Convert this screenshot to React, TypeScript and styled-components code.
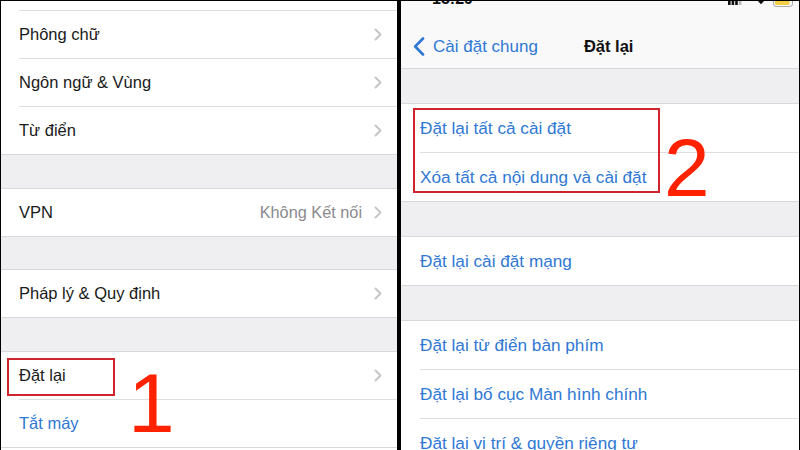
import React from 'react';
import styled, { createGlobalStyle } from 'styled-components';

const Global = createGlobalStyle`
  html, body { margin: 0; padding: 0; background: #000; }
  body { font-family: "Liberation Sans", Arial, sans-serif; -webkit-font-smoothing: antialiased; }
  #root { width: 800px; height: 450px; }
`;

const Frame = styled.div`
  width: 800px;
  height: 450px;
  box-sizing: border-box;
  padding: 1px 1px 0 1px;
  display: flex;
  gap: 4px;
  background: #000;
  overflow: hidden;
`;

const Panel = styled.div<{ $w: number }>`
  width: ${(p) => p.$w}px;
  flex: none;
  height: 449px;
  background: #fff;
  overflow: hidden;
  display: flex;
  flex-direction: column;
`;

const Spacer = styled.div<{ $h: number }>`
  height: ${(p) => p.$h}px;
  flex: none;
  background: #efeff2;
`;

const Group = styled.div<{ $noTop?: boolean }>`
  position: relative;
  flex: none;
  background: #fff;
  border-top: ${(p) => (p.$noTop ? 'none' : '1px solid #d8d8dc')};
  border-bottom: 1px solid #d8d8dc;
`;

const Row = styled.div<{ $inset: number }>`
  padding-left: ${(p) => p.$inset}px;
`;

const RowBody = styled.div<{ $h: number; $last?: boolean; $size: number }>`
  display: flex;
  align-items: center;
  height: ${(p) => p.$h}px;
  padding-right: 15px;
  border-bottom: ${(p) => (p.$last ? 'none' : '1px solid #dedee2')};
  font-size: ${(p) => p.$size}px;
`;

const Label = styled.span<{ $blue?: boolean }>`
  flex: 1;
  color: ${(p) => (p.$blue ? '#2f78d4' : '#1a1a1a')};
  white-space: nowrap;
`;

const Detail = styled.span`
  color: #8a8a8e;
  font-size: 16.3px;
  margin-right: 12px;
`;

const HighlightBox = styled.div<{ $l: number; $t: number; $w: number; $h: number }>`
  position: absolute;
  left: ${(p) => p.$l}px;
  top: ${(p) => p.$t}px;
  width: ${(p) => p.$w}px;
  height: ${(p) => p.$h}px;
  box-sizing: border-box;
  border: 2px solid #d0232b;
  pointer-events: none;
`;

const StepNumber = styled.span<{ $l: number; $t: number; $size: number }>`
  position: absolute;
  left: ${(p) => p.$l}px;
  top: ${(p) => p.$t}px;
  font-family: "Liberation Sans", Arial, sans-serif;
  font-size: ${(p) => p.$size}px;
  line-height: 1;
  color: #ff2200;
`;

const Header = styled.div`
  flex: none;
  background: #f9f9f9;
  border-bottom: 1px solid #d8d8dc;
  height: 67px;
  display: flex;
  flex-direction: column;
`;

const StatusBar = styled.div`
  height: 21px;
  display: flex;
  align-items: flex-start;
  overflow: hidden;
`;

const Time = styled.span`
  margin-left: 31px;
  margin-top: -10px;
  font-size: 16px;
  line-height: 16px;
  font-weight: 700;
  color: #111;
`;

const StatusIcons = styled.svg`
  margin-left: auto;
  margin-right: 6px;
  flex: none;
`;

const NavBar = styled.div`
  height: 46px;
  padding-top: 3px;
  box-sizing: border-box;
  display: flex;
  align-items: center;
`;

const BackChevron = styled.svg`
  margin-left: 12px;
  flex: none;
`;

const BackText = styled.span`
  margin-left: 8px;
  font-size: 17px;
  color: #2f78d4;
`;

const Title = styled.span`
  margin-left: 46px;
  font-size: 16.5px;
  font-weight: 700;
  color: #111;
`;

const Chevron = () => (
  <svg width="8" height="13" viewBox="0 0 8 13">
    <polyline points="1.5,1.5 6.5,6.5 1.5,11.5" fill="none" stroke="#c4c4c8" strokeWidth="1.8" strokeLinecap="round" strokeLinejoin="round" />
  </svg>
);

type LeftItem = { label: string; detail?: string; blue?: boolean; chevron?: boolean };

const LeftRow = ({ item, last }: { item: LeftItem; last?: boolean }) => (
  <Row $inset={18}>
    <RowBody $h={47} $last={last} $size={16.5}>
      <Label $blue={item.blue}>{item.label}</Label>
      {item.detail && <Detail>{item.detail}</Detail>}
      {item.chevron !== false && <Chevron />}
    </RowBody>
  </Row>
);

const RightRow = ({ label, last }: { label: string; last?: boolean }) => (
  <Row $inset={19}>
    <RowBody $h={48} $last={last} $size={17.2}>
      <Label $blue>{label}</Label>
    </RowBody>
  </Row>
);

export default function App() {
  return (
    <>
      <Global />
      <Frame>
        <Panel $w={396}>
          <Group $noTop>
            <Row $inset={18}>
              <RowBody $h={9} $size={16.5} />
            </Row>
            <LeftRow item={{ label: 'Phông chữ' }} />
            <LeftRow item={{ label: 'Ngôn ngữ & Vùng' }} />
            <LeftRow item={{ label: 'Từ điển' }} last />
          </Group>
          <Spacer $h={33} />
          <Group>
            <LeftRow item={{ label: 'VPN', detail: 'Không Kết nối' }} last />
          </Group>
          <Spacer $h={32} />
          <Group>
            <LeftRow item={{ label: 'Pháp lý & Quy định' }} last />
          </Group>
          <Spacer $h={33} />
          <Group>
            <LeftRow item={{ label: 'Đặt lại' }} />
            <LeftRow item={{ label: 'Tắt máy', blue: true, chevron: false }} last />
            <HighlightBox $l={6} $t={6} $w={108} $h={38} />
            <StepNumber $l={127} $t={9} $size={84}>1</StepNumber>
          </Group>
        </Panel>

        <Panel $w={398}>
          <Header>
            <StatusBar>
              <Time>15:29</Time>
              <StatusIcons width="66" height="8" viewBox="0 0 66 8">
                <rect x="1" y="-6" width="2.6" height="10" fill="#111" />
                <rect x="4.6" y="-6" width="2.6" height="10" fill="#111" />
                <rect x="8.2" y="-6" width="2.6" height="10" fill="#111" />
                <rect x="11.8" y="-6" width="2.6" height="10" fill="#b8b8b8" />
                <path d="M29.5 -1.5 Q34 -4 38.5 -1.5 L34 3.2 Z" fill="#111" />
                <rect x="46.5" y="-6" width="19" height="11.5" rx="2.6" fill="none" stroke="#a8a8a8" strokeWidth="1" />
                <rect x="48" y="-6" width="14.5" height="10" rx="1.2" fill="#f2cf45" />
              </StatusIcons>
            </StatusBar>
            <NavBar>
              <BackChevron width="12" height="19" viewBox="0 0 12 19">
                <polyline points="10,1.5 2.2,9.5 10,17.5" fill="none" stroke="#2f78d4" strokeWidth="2.6" strokeLinecap="round" strokeLinejoin="round" />
              </BackChevron>
              <BackText>Cài đặt chung</BackText>
              <Title>Đặt lại</Title>
            </NavBar>
          </Header>
          <Spacer $h={34} />
          <Group>
            <RightRow label="Đặt lại tất cả cài đặt" />
            <RightRow label="Xóa tất cả nội dung và cài đặt" last />
            <HighlightBox $l={12} $t={4} $w={247} $h={85} />
            <StepNumber $l={263} $t={23} $size={82}>2</StepNumber>
          </Group>
          <Spacer $h={34} />
          <Group>
            <RightRow label="Đặt lại cài đặt mạng" last />
          </Group>
          <Spacer $h={34} />
          <Group>
            <RightRow label="Đặt lại từ điển bàn phím" />
            <RightRow label="Đặt lại bố cục Màn hình chính" />
            <RightRow label="Đặt lại vị trí & quyền riêng tư" last />
          </Group>
        </Panel>
      </Frame>
    </>
  );
}
